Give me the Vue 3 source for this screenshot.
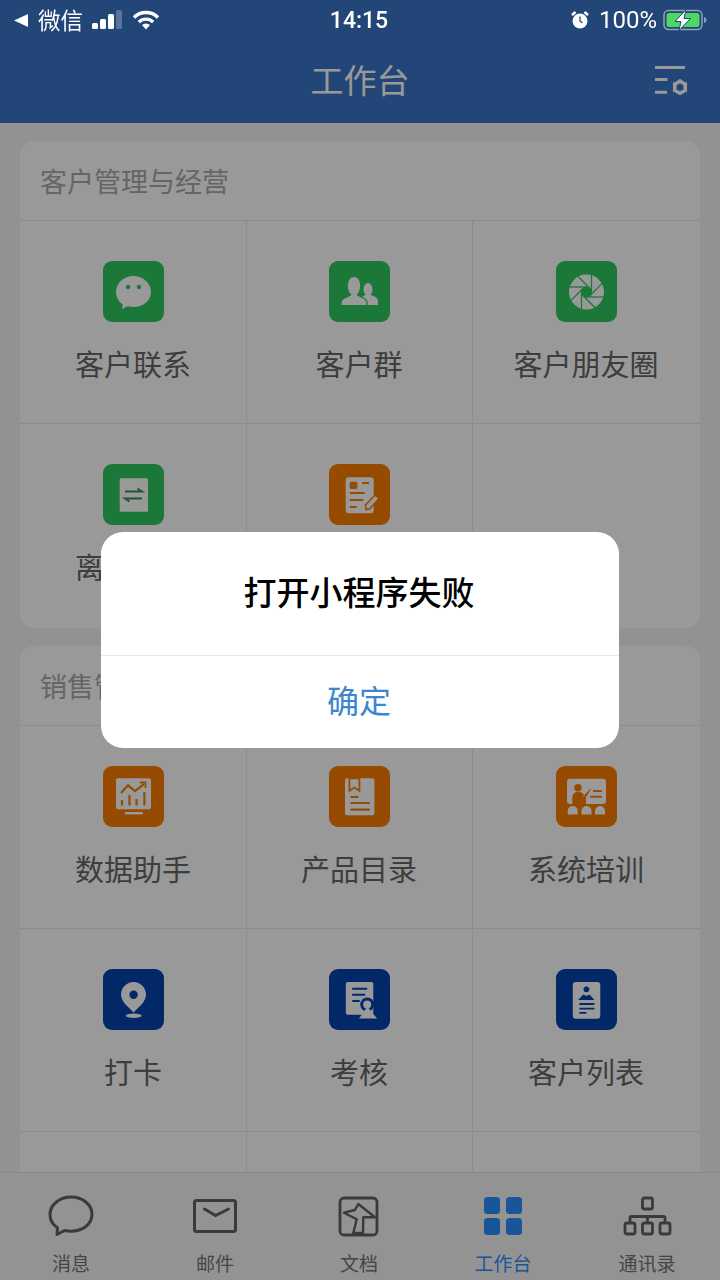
<script setup>
const green = '#2fc85e'
const orange = '#fb7e00'
const blue = '#0544ae'
const sections = [
  {
    title: '客户管理与经营',
    cells: [
      { label: '客户联系', icon: 'chat', color: green },
      { label: '客户群', icon: 'people', color: green },
      { label: '客户朋友圈', icon: 'aperture', color: green },
      { label: '离职继承', icon: 'swap', color: green },
      { label: '', icon: 'form', color: orange },
      { label: '', icon: '', color: '' },
    ],
  },
  {
    title: '销售管理',
    cells: [
      { label: '数据助手', icon: 'chart', color: orange },
      { label: '产品目录', icon: 'book', color: orange },
      { label: '系统培训', icon: 'training', color: orange },
      { label: '打卡', icon: 'pin', color: blue },
      { label: '考核', icon: 'exam', color: blue },
      { label: '客户列表', icon: 'card', color: blue },
      { label: '', icon: '', color: '' },
      { label: '', icon: '', color: '' },
      { label: '', icon: '', color: '' },
    ],
  },
]
const blades = [0, 45, 90, 135, 180, 225, 270, 315]
const gearTeeth = [0, 60, 120]
const tabs = [
  { label: '消息', icon: 'msg' },
  { label: '邮件', icon: 'mail' },
  { label: '文档', icon: 'doc' },
  { label: '工作台', icon: 'grid', active: true },
  { label: '通讯录', icon: 'org' },
]
</script>

<template>
  <div class="page">
    <header class="nav">
      <div class="status">
        <div class="st-left">
          <svg class="back" width="14" height="13" viewBox="0 0 14 13"><path d="M14 0v13L0 6.500z" fill="#fff" /></svg>
          <span class="st-app">微信</span>
          <svg class="signal" width="32" height="20" viewBox="0 0 32 20">
            <rect x="0" y="13" width="6" height="6" rx="1.500" fill="#fff" />
            <rect x="8" y="9" width="6" height="10" rx="1.500" fill="#fff" />
            <rect x="16" y="4" width="6" height="15" rx="1.500" fill="#fff" />
            <rect x="24" y="0" width="6" height="19" rx="1.500" fill="#fff" fill-opacity=".25" />
          </svg>
          <svg class="wifi" width="28" height="20" viewBox="0 0 28 20">
            <path d="M2 7.500a17 17 0 0 1 24 0" fill="none" stroke="#fff" stroke-width="3.400" />
            <path d="M6.800 12a10.400 10.400 0 0 1 14.400 0" fill="none" stroke="#fff" stroke-width="3.400" />
            <path d="M10 15a6 6 0 0 1 8 0l-4 4.500z" fill="#fff" />
          </svg>
        </div>
        <div class="st-time">14:15</div>
        <div class="st-right">
          <svg width="18" height="20" viewBox="0 0 18 20">
            <circle cx="9" cy="11" r="7.500" fill="#fff" />
            <path d="M9 6.500V11l2.500 2" fill="none" stroke="#224677" stroke-width="1.300" />
            <path d="M1 5l3.500-3M17 5l-3.500-3" stroke="#fff" stroke-width="2.600" />
          </svg>
          <span class="st-pct">100%</span>
          <svg width="44" height="22" viewBox="0 0 44 22">
            <rect x="1" y="1.500" width="38" height="19" rx="4.500" fill="none" stroke="#8fa3b5" stroke-width="1.500" />
            <rect x="3.500" y="4" width="33" height="14" rx="2.500" fill="#4bd964" />
            <path d="M41 8v6c1.500-.5 2.500-1.500 2.500-3s-1-2.500-2.500-3z" fill="#8fa3b5" />
            <path d="M23 0.500L12 12.500h6l-2 9L27.500 9.500H21z" fill="#fff" stroke="#224677" stroke-width="1" />
          </svg>
        </div>
      </div>
      <div class="titlebar">
        <span></span>
        <h1 class="title">工作台</h1>
        <svg class="settings" width="36" height="32" viewBox="0 0 36 32">
          <path d="M3 1.500h30M3 13.500h12.500M3 26.200h12" stroke="#fff" stroke-width="3" fill="none" />
          <path d="M28 15.200l5.200 3v6l-5.200 3-5.200-3v-6z" fill="none" stroke="#fff" stroke-width="3.600" stroke-linejoin="round" />
          <path v-for="a in gearTeeth" :key="a" d="M28 13.300v15.800" stroke="#fff" stroke-width="2.600" fill="none" stroke-dasharray="3 9.800" :transform="`rotate(${a} 28 21.200)`" />
        </svg>
      </div>
    </header>

    <main class="main">
      <section v-for="s in sections" :key="s.title" class="card">
        <h2 class="card-title">{{ s.title }}</h2>
        <div class="cells">
          <div v-for="(c, i) in s.cells" :key="i" class="cell">
            <svg v-if="c.icon" class="app-icon" width="61" height="61" viewBox="0 0 61 61">
              <rect width="61" height="61" rx="9" :fill="c.color" />
              <template v-if="c.icon === 'chat'">
                <path d="M30.500 15c-9.700 0-17.500 6.900-17.500 16 0 5.300 2.700 9.800 6.900 12.700L19 48l5.700-2.700c1.800.5 3.800.8 5.800.8 9.700 0 17.500-6.500 17.500-15.100S40.200 15 30.500 15z" fill="#fff" />
                <circle cx="25" cy="26" r="2.200" :fill="c.color" />
                <circle cx="36" cy="26" r="2.200" :fill="c.color" />
              </template>
              <template v-else-if="c.icon === 'people'">
                <ellipse cx="39" cy="28.500" rx="4.500" ry="6.500" fill="#fff" />
                <path d="M33 44v-8l3-2h6l3.500 1.500c2 1 3.500 2 3.500 4.500v4z" fill="#fff" />
                <ellipse cx="25" cy="24.500" rx="6.800" ry="9.200" fill="#fff" :stroke="c.color" stroke-width="1.200" />
                <path d="M12 44.500v-3c0-3 3-4.500 6-5.500l4-2.500h6l4 2.500c3 1 6 2.500 6 5.500v3z" fill="#fff" :stroke="c.color" stroke-width="1.200" />
                <ellipse cx="25" cy="27" rx="5.500" ry="7.500" fill="#fff" />
              </template>
              <template v-else-if="c.icon === 'aperture'">
                <circle cx="30.500" cy="31" r="17.500" fill="#fff" />
                <circle cx="30.500" cy="31" r="5.500" :fill="c.color" />
                <path v-for="a in blades" :key="a" d="M35.500 31V12" :stroke="c.color" stroke-width="1.300" :transform="`rotate(${a} 30.500 31)`" />
              </template>
              <template v-else-if="c.icon === 'swap'">
                <rect x="16.700" y="14.300" width="28.300" height="33.400" rx="1.500" fill="#fff" />
                <path d="M22 27.500h17l-4.500-3M39 34.500H22l4.500 3" fill="none" stroke="#3b8c55" stroke-width="2" />
              </template>
              <template v-else-if="c.icon === 'form'">
                <rect x="16.700" y="13.300" width="28" height="36" rx="3" fill="#fff" />
                <rect x="20.700" y="17.700" width="7.600" height="7.300" rx="1.500" :fill="c.color" />
                <path d="M33 19h7M20.700 29h15M20.700 36h13.500M20.700 43h7" :stroke="c.color" stroke-width="2" />
                <path d="M37 45.500l-.5-4.500 9.500-10 4 3.500-9.500 10.500z" fill="#fff" :stroke="c.color" stroke-width="1.600" />
              </template>
              <template v-else-if="c.icon === 'chart'">
                <rect x="13" y="12.300" width="35" height="31" rx="2" fill="#fff" />
                <rect x="21.800" y="46" width="18" height="2.400" fill="#fff" />
                <path d="M18 27l7-7.700 7 5.700 9-7" fill="none" :stroke="c.color" stroke-width="2.200" />
                <path d="M37 16.500h5.500V22" fill="none" :stroke="c.color" stroke-width="1.800" />
                <path d="M19 34v5.500M26.500 29v10.500M33.500 33v6.500M41.400 26v13.500" :stroke="c.color" stroke-width="2.200" />
              </template>
              <template v-else-if="c.icon === 'book'">
                <rect x="16" y="12.300" width="29.400" height="37" rx="2" fill="#fff" />
                <path d="M20.400 12.300h10v12.500l-5-3.200-5 3.200z" fill="#fff" :stroke="c.color" stroke-width="1.800" />
                <path d="M21.400 31h8M21.400 37h19.300M21.400 43.700h19.300" :stroke="c.color" stroke-width="2.200" />
              </template>
              <template v-else-if="c.icon === 'training'">
                <path d="M14 12.700h33a3 3 0 0 1 3 3V35a3 3 0 0 1-3 3H14a3 3 0 0 1-3-3V15.700a3 3 0 0 1 3-3z" fill="#fff" />
                <circle cx="22" cy="21.700" r="3.700" :fill="c.color" />
                <path d="M16.700 42V31c0-3 2-4.700 5.300-4.700s5 1 6 3.200l2 .8 4.300-7.500" :fill="c.color" />
                <path d="M17 42V31c0-2.800 2-4.700 5-4.700 2.700 0 4.500 1.300 5.500 3.300l2.500 1L34.300 23" fill="none" :stroke="c.color" stroke-width="1" />
                <path d="M16.700 42h13.300V31H16.700z" :fill="c.color" />
                <path d="M37 25h8.700M34.300 30.700h11.400" :stroke="c.color" stroke-width="2" />
                <path d="M11.700 48.500v-3.500a5 5 0 0 1 10 0v3.500zM25.500 48.500v-3.500a5 5 0 0 1 10 0v3.500zM39 48.500v-3.500a5 5 0 0 1 10 0v3.500z" fill="#fff" />
              </template>
              <template v-else-if="c.icon === 'pin'">
                <path d="M30.600 13C23.700 13 18 18.700 18 25.600c0 7.500 8 12.900 12.600 17.900 4.600-5 12.400-10.400 12.400-17.900C43 18.700 37.500 13 30.600 13z" fill="#fff" />
                <circle cx="30.600" cy="25.700" r="4.200" :fill="c.color" />
                <ellipse cx="30.700" cy="46.800" rx="8" ry="2.200" fill="#fff" />
              </template>
              <template v-else-if="c.icon === 'exam'">
                <rect x="16.800" y="13" width="27.500" height="32.700" rx="2" fill="#fff" />
                <path d="M23.200 19.700h15M23.200 25.700h13M23.200 31.900h7.500" :stroke="c.color" stroke-width="2" />
                <circle cx="38.200" cy="35.500" r="7" :fill="c.color" />
                <circle cx="38.200" cy="35.500" r="4" fill="#fff" />
                <path d="M38.400 37.500L30 49.500h18z" fill="#fff" />
              </template>
              <template v-else-if="c.icon === 'card'">
                <rect x="16.800" y="13" width="27.500" height="36.700" rx="3" fill="#fff" />
                <circle cx="30.400" cy="20.300" r="2.900" :fill="c.color" />
                <path d="M22.200 31l5-5.500 3.300 1.500 3-1.500 5 5.500z" :fill="c.color" />
                <path d="M23.400 35h15M23.400 39.700h15M23.400 43.900h7" :stroke="c.color" stroke-width="1.800" />
              </template>
            </svg>
            <div v-if="c.label" class="cell-label">{{ c.label }}</div>
          </div>
        </div>
      </section>
    </main>

    <footer class="tabbar">
      <div v-for="t in tabs" :key="t.label" class="tab" :class="{ active: t.active }">
        <svg class="tab-icon" width="60" height="44" viewBox="0 0 60 44">
          <g v-if="t.icon === 'msg'" fill="none" stroke="#616161" stroke-width="3">
            <path d="M30 3c-11 0-21 7.500-21 17.500 0 5.700 3.200 10.500 7.500 13.200L16 40.500l7.500-4c2 .5 4.300.7 6.500.7 11.500 0 21-6.900 21-17C51 10.500 41.500 3 30 3z" stroke-linejoin="round" />
          </g>
          <g v-else-if="t.icon === 'mail'" fill="none" stroke="#616161" stroke-width="3">
            <rect x="9.500" y="6.500" width="41" height="31" rx="2" />
            <path d="M19.500 15l11 6.500 13-6.500" stroke-linecap="round" />
          </g>
          <g v-else-if="t.icon === 'doc'" fill="none" stroke="#616161" stroke-width="2.800">
            <rect x="11" y="4" width="37" height="37" rx="4" />
            <path d="M29.300 10L46 23.300H34.300L34 39H24.300l3.400-13.700L15 18.700 26 16z" stroke-linejoin="round" stroke-width="2.400" />
          </g>
          <g v-else-if="t.icon === 'grid'" fill="#2b8fff">
            <rect x="11" y="3" width="16" height="17" rx="3.500" />
            <rect x="33" y="3" width="16" height="17" rx="3.500" />
            <rect x="11" y="24" width="16" height="17" rx="3.500" />
            <rect x="33" y="24" width="16" height="17" rx="3.500" />
          </g>
          <g v-else-if="t.icon === 'org'" fill="none" stroke="#616161" stroke-width="2.800">
            <rect x="25.500" y="4" width="10" height="11" rx="2" />
            <rect x="8" y="29" width="10" height="11" rx="2" />
            <rect x="25.500" y="29" width="10" height="11" rx="2" />
            <rect x="43" y="29" width="10" height="11" rx="2" />
            <path d="M13 29v-5a1.500 1.500 0 0 1 1.500-1.500h32A1.500 1.500 0 0 1 48 24v5M30.500 22.500V29" />
          </g>
        </svg>
        <div class="tab-label">{{ t.label }}</div>
      </div>
    </footer>

    <div class="mask">
      <div class="dialog">
        <div class="dialog-title">打开小程序失败</div>
        <div class="dialog-btn">确定</div>
      </div>
    </div>
  </div>
</template>

<style>
html, body { margin: 0; padding: 0; }
</style>

<style scoped>
.page {
  width: 720px;
  height: 1280px;
  overflow: hidden;
  display: flex;
  flex-direction: column;
  background: #f4f4f4;
  font-family: "Noto Sans CJK SC", "Noto Sans", sans-serif;
}
.nav {
  height: 123px;
  flex: none;
  background: #3975c6;
}
.status {
  position: relative;
  z-index: 20;
  height: 40px;
  padding: 0 13px 0 14px;
  display: grid;
  grid-template-columns: 1fr auto 1fr;
  align-items: center;
  color: #fff;
}
.st-left, .st-right {
  display: flex;
  align-items: center;
}
.st-right { justify-content: flex-end; }
.st-app {
  font-size: 22.500px;
  line-height: 38px;
  padding-bottom: 2px;
  margin-left: 10px;
}
.signal { margin-left: 9px; }
.wifi { margin-left: 8px; }
.st-time {
  font-family: Roboto, "Liberation Sans", sans-serif;
  font-size: 23px;
  font-weight: 500;
  padding-right: 3px;
}
.st-pct {
  font-family: Roboto, "Liberation Sans", sans-serif;
  font-size: 24px;
  margin: 0 6px 0 10px;
}
.titlebar {
  height: 83px;
  display: grid;
  grid-template-columns: 1fr auto 1fr;
  align-items: center;
}
.title {
  margin: 0;
  padding-bottom: 6px;
  font-size: 33px;
  font-weight: 400;
  color: #fff;
  line-height: 44px;
}
.settings {
  justify-self: end;
  margin-right: 32px;
}
.main {
  flex: 1;
  min-height: 0;
  overflow: hidden;
  padding: 18px 20px 0;
  display: flex;
  flex-direction: column;
  gap: 18px;
}
.card {
  flex: none;
  background: #fff;
  border-radius: 14px;
  overflow: hidden;
}
.card-title {
  margin: 0;
  height: 79px;
  padding-left: 20px;
  font-size: 27px;
  font-weight: 400;
  line-height: 80px;
  color: #a8a8a8;
  border-bottom: 1px solid #e9e9e9;
}
.cells {
  display: grid;
  grid-template-columns: 226px 226px 228px;
}
.cell {
  height: 202px;
  border-bottom: 1px solid #e9e9e9;
  border-right: 1px solid #e9e9e9;
  margin-right: -1px;
  display: flex;
  flex-direction: column;
  align-items: center;
}
.cell:nth-child(3n) { border-right: 0; margin-right: 0; }
.cells .cell:nth-last-child(-n+3) { border-bottom: 0; height: 204px; }
.app-icon {
  display: block;
  margin-top: 40px;
}
.cell-label {
  margin-top: 21px;
  font-size: 29px;
  line-height: 40px;
  color: #666;
  white-space: nowrap;
}
.tabbar {
  flex: none;
  height: 108px;
  box-sizing: border-box;
  border-top: 1px solid #e4e4e4;
  background: #f5f5f5;
  display: grid;
  grid-template-columns: repeat(5, 144px);
}
.tab {
  display: flex;
  flex-direction: column;
  align-items: center;
  padding: 21px 2px 0 0;
}
.tab-icon { display: block; }
.tab-label {
  margin-top: 11px;
  font-size: 19px;
  line-height: 28px;
  color: #737373;
}
.tab.active .tab-label { color: #2b8fff; }
.mask {
  position: fixed;
  inset: 0;
  z-index: 10;
  background: rgba(0, 0, 0, .4);
}
.dialog {
  position: absolute;
  left: 101px;
  top: 532px;
  width: 518px;
  height: 216px;
  background: #fff;
  border-radius: 22px;
  display: flex;
  flex-direction: column;
}
.dialog-title {
  height: 124px;
  flex: none;
  box-sizing: border-box;
  border-bottom: 1px solid #e8e8e8;
  padding-right: 2px;
  text-align: center;
  font-size: 33px;
  font-weight: 500;
  line-height: 118px;
  color: #000;
}
.dialog-btn {
  flex: 1;
  display: flex;
  align-items: center;
  justify-content: center;
  padding: 0 2px 7px 0;
  font-size: 32px;
  color: #3d86cf;
}
</style>
